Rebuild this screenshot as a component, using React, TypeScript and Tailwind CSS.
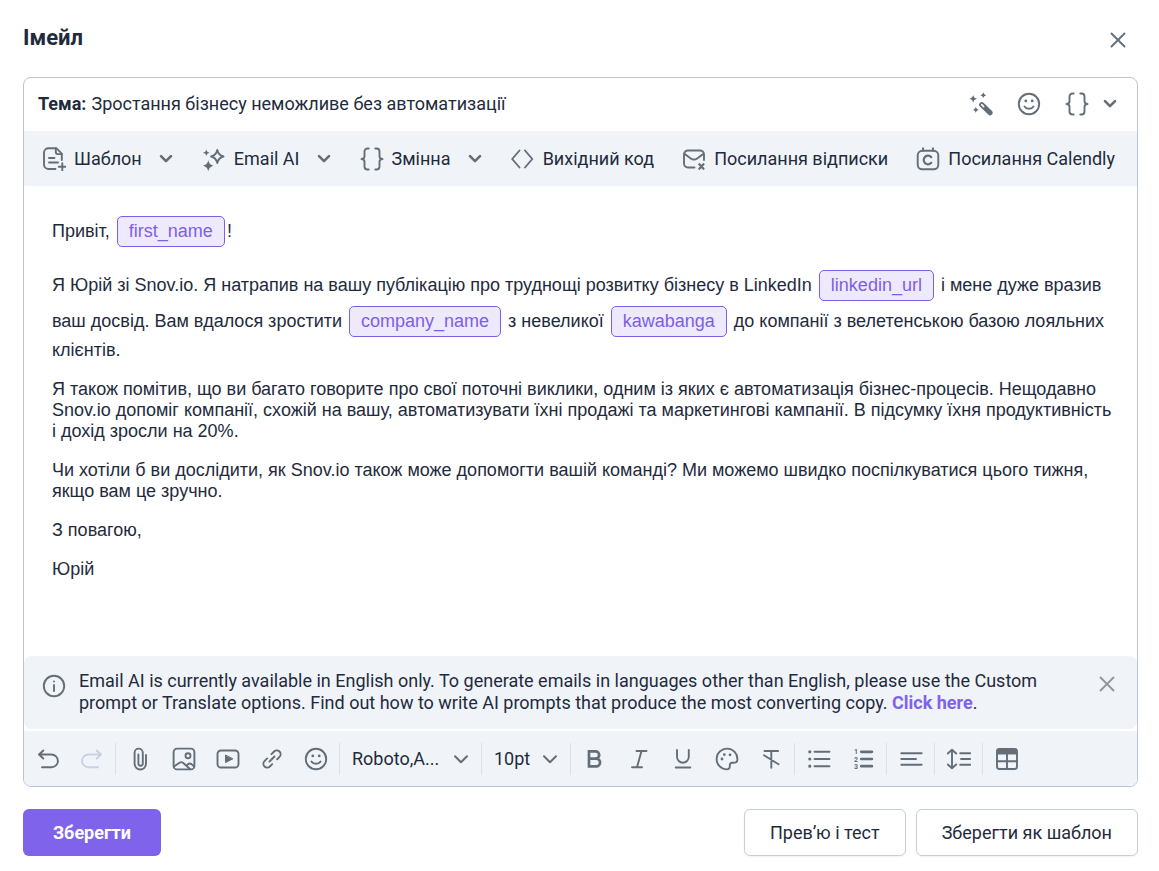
import { useState } from "react"
import type { ReactNode } from "react"
import clsx from "clsx"

type IconProps = { children: ReactNode; className?: string }

function Icon({ children, className }: IconProps) {
  return (
    <svg
      viewBox="0 0 24 24"
      fill="none"
      stroke="currentColor"
      strokeWidth="1.9"
      strokeLinecap="round"
      strokeLinejoin="round"
      aria-hidden="true"
      className={clsx("h-6 w-6 shrink-0", className)}
    >
      {children}
    </svg>
  )
}

const TemplateIcon = () => (
  <Icon>
    <path d="M13.5 22H6.5a4.5 4.5 0 0 1-4.5-4.5v-12A4.5 4.5 0 0 1 6.5 1.3h8l5.3 5.3v6.4" />
    <path d="M13.8 1.5v3.6a2 2 0 0 0 2 2h3.8" />
    <path d="M7 11h5.5M7 15.5h9M20.3 16.3v7M16.8 19.8h7" />
  </Icon>
)

const SparklesIcon = () => (
  <Icon>
    <path d="M15.3 3c.8 3.8 2.2 5.4 6.2 6.5-4 1.1-5.400 2.7-6.2 6.5-.8-3.8-2.2-5.4-6.2-6.5 4-1.1 5.4-2.7 6.2-6.5z" />
    <path
      fill="currentColor"
      stroke="none"
      d="M4.3 2.300c.5 2.200 1.200 3 3.500 3.500-2.300.5-3 1.300-3.500 3.500C3.800 7.100 3.100 6.300.8 5.800c2.300-.5 3-1.300 3.500-3.500zM6.300 13c.8 3.700 2 5 5.700 5.700-3.700.8-4.900 2.100-5.700 5.700-.8-3.600-2-4.900-5.700-5.700 3.700-.7 4.900-2 5.700-5.700z"
    />
  </Icon>
)

const BracesIcon = () => (
  <Icon>
    <path d="M8.700 1.500H7.500a3 3 0 0 0-3 3V9a3 3 0 0 1-3 3 3 3 0 0 1 3 3v4.500a3 3 0 0 0 3 3h1.200" />
    <path d="M15.300 1.500h1.200a3 3 0 0 1 3 3V9a3 3 0 0 0 3 3 3 3 0 0 0-3 3v4.500a3 3 0 0 1-3 3h-1.200" />
  </Icon>
)

const CodeIcon = () => (
  <Icon>
    <path d="M8.500 3.500 1.200 12l7.300 8.500M14 3.500l7.300 8.500-7.300 8.500" />
  </Icon>
)

const MailXIcon = () => (
  <Icon>
    <path d="M12.500 20.500H6a4 4 0 0 1-4-4v-9a4 4 0 0 1 4-4h12a4 4 0 0 1 4 4V13" />
    <path d="m2.800 7 6 4.400a5.500 5.500 0 0 0 6.400 0l6-4.400" />
    <path strokeWidth="2.200" d="m17.300 17.200 4.200 4.600m0-4.600-4.200 4.600" />
  </Icon>
)

const CalendlyIcon = () => (
  <Icon>
    <rect x="1.700" y="3.800" width="20.600" height="18.500" rx="4.500" />
    <path d="M7 1.200v2.500M17 1.200v2.500" />
    <path strokeWidth="2.200" d="M15.300 10.200a4.300 4.300 0 1 0 0 5.600" />
  </Icon>
)

const WandIcon = () => (
  <Icon>
    <path strokeWidth="5.200" d="m12.700 12.700 8.300 8" />
    <path stroke="white" strokeWidth="1.600" d="m12.700 12.700 2 1.900" />
    <path
      fill="currentColor"
      stroke="none"
      d="M4.200 3c.6 2.500 1.400 3.200 3.900 3.800-2.500.6-3.300 1.400-3.900 3.900C3.600 8.200 2.800 7.400.3 6.800 2.800 6.200 3.600 5.500 4.200 3zM14.300.2c.5 2 1.100 2.600 3.100 3-2 .5-2.600 1.100-3.100 3.100-.5-2-1.100-2.600-3.100-3.100 2-.4 2.600-1 3.100-3zM6.800 14.700c.5 2 1.100 2.600 3.100 3.100-2 .5-2.600 1.100-3.100 3.100-.5-2-1.100-2.600-3.100-3.100 2-.5 2.600-1.100 3.100-3.100z"
    />
    <path
      strokeWidth="1.200"
      d="M4.200 5v3.600M2.400 6.800H6M14.300 2v2.500M13 3.200h2.600M6.800 16.500v2.600M5.500 17.800h2.600"
    />
  </Icon>
)

const SmileIcon = () => (
  <Icon>
    <circle cx="12" cy="12" r="10.200" />
    <path d="M7.500 14.500c1 1.500 2.600 2.300 4.500 2.300s3.500-.8 4.500-2.300" />
    <path strokeWidth="2.800" d="M8.800 8.900v.01M15.200 8.900v.01" />
  </Icon>
)

const InfoIcon = () => (
  <Icon>
    <circle cx="12" cy="12" r="10.200" />
    <path d="M12 11v6M12 7.500v.01" />
  </Icon>
)

const CloseIcon = () => (
  <Icon>
    <path d="m5.500 5.500 13 13m0-13-13 13" />
  </Icon>
)

const Chevron = ({ thin }: { thin?: boolean }) => (
  <svg
    viewBox="0 0 16 16"
    fill="none"
    stroke="currentColor"
    strokeWidth={thin ? 2 : 2.6}
    strokeLinecap="round"
    strokeLinejoin="round"
    aria-hidden="true"
    className="pointer-events-none h-4 w-4 shrink-0"
  >
    <path d={thin ? "m2 5.200 6 6 6-6" : "m3 5.200 5 5 5-5"} />
  </svg>
)

const UndoIcon = ({ className }: { className?: string }) => (
  <Icon className={className}>
    <path d="M7.300 3.500 3 7.500l4.300 4M3.500 7.500h12a6.300 6.300 0 0 1 0 12.800H6" />
  </Icon>
)

const ClipIcon = () => (
  <Icon>
    <path d="M18 8v8.800a5.700 5.700 0 0 1-11.400 0V5.700a4.100 4.100 0 0 1 8.200 0v10.800a2.200 2.200 0 0 1-4.400 0V7.500" />
  </Icon>
)

const ImageIcon = () => (
  <Icon>
    <rect x="1.600" y="1.600" width="20.800" height="20.800" rx="3.500" />
    <circle cx="16" cy="8.800" r="2.500" />
    <path d="m2 19.500 5.500-3.800a3 3 0 0 1 3.500.1l7 6.200M14.500 18.500l1.500-1.300a2.800 2.800 0 0 1 3.600 0l2.500 2" />
  </Icon>
)

const VideoIcon = () => (
  <Icon>
    <rect x="1.500" y="3.500" width="21" height="17" rx="3.500" />
    <path fill="currentColor" strokeWidth="1" d="M9.500 8.400v7.200l7-3.600z" />
  </Icon>
)

const LinkIcon = () => (
  <Icon className="-rotate-45">
    <path d="M8.500 15.800H5.200a3.800 3.800 0 0 1 0-7.600H9M15 8.200h3.800a3.800 3.800 0 0 1 0 7.600h-3.300M8.500 12h7" />
  </Icon>
)

const BoldIcon = () => (
  <Icon>
    <path
      strokeWidth="2.700"
      strokeLinecap="butt"
      strokeLinejoin="miter"
      d="M6 4.300h6.500a3.700 3.700 0 0 1 0 7.400H6zm0 7.400h7.200a3.800 3.800 0 0 1 0 7.700H6z"
    />
  </Icon>
)

const ItalicIcon = () => (
  <Icon>
    <path d="M9.500 4h10M5 20.300h10M14.500 4l-4.500 16.300" />
  </Icon>
)

const UnderlineIcon = () => (
  <Icon>
    <path d="M6 3v6.800a5.900 5.900 0 0 0 11.800 0V3M4.700 20.500h14.600" />
  </Icon>
)

const PaletteIcon = () => (
  <Icon>
    <path d="M22.400 12.500c0 2.200-1.600 3.300-3.700 3.300h-1.400c-1.900 0-2.700 1.200-2.500 3 .2 2.200-.8 3.600-3 3.600A10.400 10.400 0 1 1 22.400 12.500z" />
    <path strokeWidth="2.800" d="M7 12v.01M9.300 7.600v.01M15 7.800v.01" />
  </Icon>
)

const StrikeIcon = () => (
  <Icon>
    <path d="M5.500 4h13.600M12.300 4v16.800M5 8.200l14.500 9" />
  </Icon>
)

const BulletListIcon = () => (
  <Icon>
    <path d="M7.500 4.800h15M7.500 12h15M7.500 19.200h15" />
    <path strokeWidth="3.200" d="M2.800 4.800v.01M2.800 12v.01M2.800 19.200v.01" />
  </Icon>
)

const NumberListIcon = () => (
  <Icon>
    <path strokeWidth="2.700" d="M10.300 4.800h10.600M10.300 12h10.600M10.300 19.200h10.600" />
    <g fill="currentColor" stroke="none" fontSize="7" fontWeight="700" fontFamily="Roboto, sans-serif">
      <text x="3" y="7.300">1</text>
      <text x="3" y="14.500">2</text>
      <text x="3" y="21.700">3</text>
    </g>
  </Icon>
)

const AlignIcon = () => (
  <Icon>
    <path d="M2.300 6.300h20.400M2.300 12h14.700M2.300 17.700h20.400" />
  </Icon>
)

const LineHeightIcon = () => (
  <Icon>
    <path d="M5 2.800v18.400M.8 6.500 5 2.800l4.200 3.700M.8 17.500 5 21.200l4.200-3.700M13.200 6.300h10M14 12h9.200M13.200 17.700h10" />
  </Icon>
)

const TableIcon = () => (
  <Icon>
    <rect x="2" y="2" width="20" height="20" rx="2.500" />
    <path fill="currentColor" d="M2.500 3.500h19v3h-19zM2 14.200h20M12 7v15" />
  </Icon>
)

function MenuItem({ icon, label, menu }: { icon: ReactNode; label: string; menu?: boolean }) {
  return (
    <button type="button" className="flex cursor-pointer items-center gap-2 whitespace-nowrap">
      <span className="text-[#646e78]">{icon}</span>
      {label}
      {menu && (
        <span className="ml-2 text-[#646e78]">
          <Chevron />
        </span>
      )}
    </button>
  )
}

function Tool({ label, children, disabled }: { label: string; children: ReactNode; disabled?: boolean }) {
  return (
    <button
      type="button"
      aria-label={label}
      disabled={disabled}
      className="flex h-8 w-11 cursor-pointer items-center justify-center disabled:cursor-default disabled:text-[#c7d1df]"
    >
      {children}
    </button>
  )
}

function ToolGroup({ children }: { children: ReactNode }) {
  return <div className="flex items-center border-r border-[#dde1e6] pr-px pl-0.5 last:border-0">{children}</div>
}

function Variable({ name }: { name: string }) {
  return (
    <span className="mx-0.5 mt-0.5 mb-[3px] inline-block rounded-[5px] border border-[#7c5fe6] bg-[#efe9fe] px-[11px] leading-[29px] text-[#7c5fe6]">
      {name}
    </span>
  )
}

export default function App() {
  const [subject, setSubject] = useState("Зростання бізнесу неможливе без автоматизації")
  const [showNotice, setShowNotice] = useState(true)

  return (
    <div className="flex min-h-screen flex-col bg-white pt-[22px] pr-[21px] pb-[15px] pl-[23px] font-[Roboto,sans-serif] text-lg text-[#1f2b3d]">
      {/* Header */}
      <header className="flex h-[55px] items-start justify-between">
        <h1 className="text-[22px] leading-8 font-bold">Імейл</h1>
        <button type="button" aria-label="Закрити" className="mt-1.5 mr-2 cursor-pointer text-[#646e78]">
          <CloseIcon />
        </button>
      </header>

      <main className="flex flex-1 flex-col overflow-hidden rounded-lg border border-[#bcc3d1]">
        {/* Subject */}
        <div className="flex h-[53px] items-center pr-[19px] pb-0.5 pl-3.5">
          <label htmlFor="subject" className="mr-[5px] font-bold">
            Тема:
          </label>
          <input
            id="subject"
            value={subject}
            onChange={(e) => setSubject(e.target.value)}
            className="min-w-0 flex-1 outline-none"
          />
          <div className="flex items-center gap-6 text-[#646e78]">
            <button type="button" aria-label="Email AI" className="cursor-pointer">
              <WandIcon />
            </button>
            <button type="button" aria-label="Емодзі" className="cursor-pointer">
              <SmileIcon />
            </button>
            <button type="button" aria-label="Змінна" className="flex cursor-pointer items-center gap-[13px]">
              <BracesIcon />
              <Chevron />
            </button>
          </div>
        </div>

        {/* Insert menu */}
        <div className="flex h-[55px] items-center justify-between bg-[#f0f4f9] pr-[22px] pl-[18px]">
          <MenuItem icon={<TemplateIcon />} label="Шаблон" menu />
          <MenuItem icon={<SparklesIcon />} label="Email AI" menu />
          <MenuItem icon={<BracesIcon />} label="Змінна" menu />
          <MenuItem icon={<CodeIcon />} label="Вихідний код" />
          <MenuItem icon={<MailXIcon />} label="Посилання відписки" />
          <MenuItem icon={<CalendlyIcon />} label="Посилання Calendly" />
        </div>

        {/* Message */}
        <div
          role="textbox"
          aria-multiline="true"
          aria-label="Текст листа"
          contentEditable
          suppressContentEditableWarning
          className="flex-1 space-y-[18px] pt-7 pr-5 pb-7 pl-7 font-['Liberation_Sans',Arial,sans-serif] leading-[21px] outline-none"
        >
          <p>
            Привіт, <Variable name="first_name" />!
          </p>
          <p>
            Я Юрій зі Snov.io. Я натрапив на вашу публікацію про труднощі розвитку бізнесу в LinkedIn{" "}
            <Variable name="linkedin_url" /> і мене дуже вразив ваш досвід. Вам вдалося зростити{" "}
            <Variable name="company_name" /> з невеликої <Variable name="kawabanga" /> до компанії з велетенською
            базою лояльних клієнтів.
          </p>
          <p>
            Я також помітив, що ви багато говорите про свої поточні виклики, одним із яких є автоматизація
            бізнес-процесів. Нещодавно Snov.io допоміг компанії, схожій на вашу, автоматизувати їхні продажі та
            маркетингові кампанії. В підсумку їхня продуктивність і дохід зросли на 20%.
          </p>
          <p>
            Чи хотіли б ви дослідити, як Snov.io також може допомогти вашій команді? Ми можемо швидко поспілкуватися
            цього тижня, якщо вам це зручно.
          </p>
          <p>З повагою,</p>
          <p>Юрій</p>
        </div>

        {/* Notice */}
        {showNotice && (
          <div className="mb-0.5 flex items-start rounded-lg bg-[#f0f4f9] pt-3.5 pr-[18px] pb-[15px] pl-[18px]">
            <span className="mt-1 mr-[13px] text-[#646e78]">
              <InfoIcon />
            </span>
            <p className="max-w-[980px] flex-1 leading-[22px]">
              Email AI is currently available in English only. To generate emails in languages other than English,
              please use the Custom prompt or Translate options. Find out how to write AI prompts that produce the
              most converting copy.{" "}
              <a href="#" className="font-bold text-[#7f63ea]">
                Click here
              </a>
              .
            </p>
            <button
              type="button"
              aria-label="Close"
              onClick={() => setShowNotice(false)}
              className="mt-0.5 ml-auto cursor-pointer text-[#8f969d]"
            >
              <CloseIcon />
            </button>
          </div>
        )}

        {/* Formatting */}
        <div className="flex h-[55px] items-center bg-[#f0f4f9] text-[#646e78]">
          <ToolGroup>
            <Tool label="Undo">
              <UndoIcon />
            </Tool>
            <Tool label="Redo" disabled>
              <UndoIcon className="-scale-x-100" />
            </Tool>
          </ToolGroup>
          <ToolGroup>
            <Tool label="Attach file">
              <ClipIcon />
            </Tool>
            <Tool label="Image">
              <ImageIcon />
            </Tool>
            <Tool label="Video">
              <VideoIcon />
            </Tool>
            <Tool label="Link">
              <LinkIcon />
            </Tool>
            <Tool label="Emoji">
              <SmileIcon />
            </Tool>
          </ToolGroup>
          <div className="relative flex h-8 items-center border-r border-[#dde1e6]">
            <select aria-label="Font" className="w-[141px] appearance-none pl-3 text-[#1f2b3d] outline-none">
              <option>Roboto,A...</option>
            </select>
            <span className="pointer-events-none absolute right-3">
              <Chevron thin />
            </span>
          </div>
          <div className="relative flex h-8 items-center border-r border-[#dde1e6]">
            <select aria-label="Font size" className="w-[88px] appearance-none pl-3 text-[#1f2b3d] outline-none">
              <option>10pt</option>
              <option>12pt</option>
              <option>14pt</option>
            </select>
            <span className="pointer-events-none absolute right-3">
              <Chevron thin />
            </span>
          </div>
          <ToolGroup>
            <Tool label="Bold">
              <BoldIcon />
            </Tool>
            <Tool label="Italic">
              <ItalicIcon />
            </Tool>
            <Tool label="Underline">
              <UnderlineIcon />
            </Tool>
            <Tool label="Text color">
              <PaletteIcon />
            </Tool>
            <Tool label="Clear formatting">
              <StrikeIcon />
            </Tool>
          </ToolGroup>
          <ToolGroup>
            <Tool label="Bullet list">
              <BulletListIcon />
            </Tool>
            <Tool label="Numbered list">
              <NumberListIcon />
            </Tool>
          </ToolGroup>
          <ToolGroup>
            <Tool label="Align">
              <AlignIcon />
            </Tool>
          </ToolGroup>
          <ToolGroup>
            <Tool label="Line height">
              <LineHeightIcon />
            </Tool>
          </ToolGroup>
          <ToolGroup>
            <Tool label="Table">
              <TableIcon />
            </Tool>
          </ToolGroup>
        </div>
      </main>

      {/* Actions */}
      <footer className="mt-[22px] flex gap-2.5">
        <button type="button" className="mr-auto h-[47px] cursor-pointer rounded-md bg-[#7f63ea] px-[30px] font-bold text-white">
          Зберегти
        </button>
        <button type="button" className="h-[47px] cursor-pointer rounded-md border border-[#c6cddb] px-[25px] shadow-xs">
          Прев’ю і тест
        </button>
        <button type="button" className="h-[47px] cursor-pointer rounded-md border border-[#c6cddb] px-[25px] shadow-xs">
          Зберегти як шаблон
        </button>
      </footer>
    </div>
  )
}
